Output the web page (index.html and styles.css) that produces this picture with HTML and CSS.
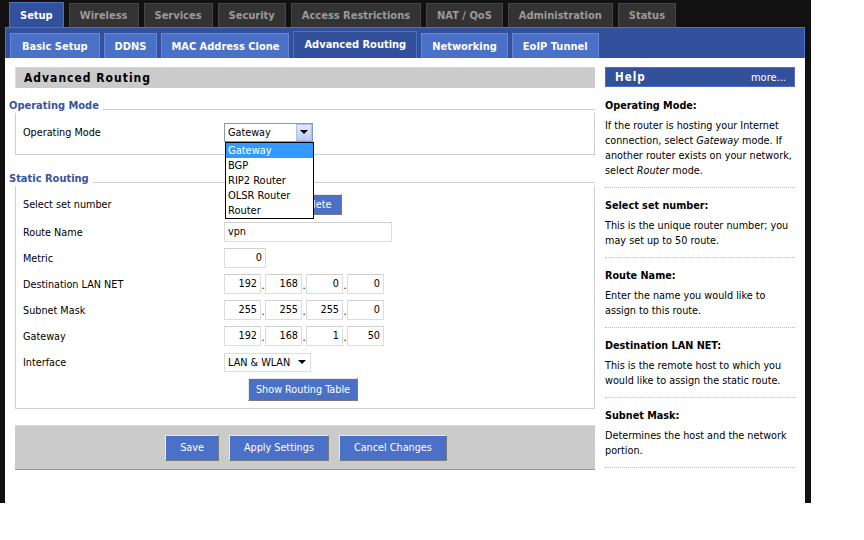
FILE: index.html
```html
<!DOCTYPE html>
<html>
<head>
<meta charset="utf-8">
<title>Advanced Routing</title>
<link rel="stylesheet" href="styles.css">
</head>
<body>
<div class="page">
  <div class="frame">
    <ul class="tabs">
      <li class="tab active">Setup</li>
      <li class="tab">Wireless</li>
      <li class="tab">Services</li>
      <li class="tab">Security</li>
      <li class="tab">Access Restrictions</li>
      <li class="tab">NAT / QoS</li>
      <li class="tab">Administration</li>
      <li class="tab">Status</li>
    </ul>
    <div class="subbar">
      <ul class="subtabs">
        <li class="subtab subtab-wide">Basic Setup</li>
        <li class="subtab">DDNS</li>
        <li class="subtab subtab-narrow">MAC Address Clone</li>
        <li class="subtab active">Advanced Routing</li>
        <li class="subtab">Networking</li>
        <li class="subtab">EoIP Tunnel</li>
      </ul>
    </div>
    <div class="content">
      <div class="main">
        <div class="pagehead">Advanced Routing</div>

        <div class="group">
          <div class="legend"><span class="legend-text">Operating Mode</span><span class="legend-line"></span></div>
          <div class="box box-op">
            <div class="row">
              <div class="label">Operating Mode</div>
              <div class="field">
                <div class="combo">
                  <span class="combo-value">Gateway</span>
                  <span class="combo-btn"><span class="tri"></span></span>
                  <ul class="dropdown">
                    <li class="opt selected">Gateway</li>
                    <li class="opt">BGP</li>
                    <li class="opt">RIP2 Router</li>
                    <li class="opt">OLSR Router</li>
                    <li class="opt">Router</li>
                  </ul>
                </div>
              </div>
            </div>
          </div>
        </div>

        <div class="group group-static">
          <div class="legend"><span class="legend-text">Static Routing</span><span class="legend-line"></span></div>
          <div class="box box-static">
            <div class="row row-first">
              <div class="label">Select set number</div>
              <div class="field">
                <span class="setsel">1 ( vpn )</span>
                <button class="btn btn-small">Delete</button>
              </div>
            </div>
            <div class="row">
              <div class="label">Route Name</div>
              <div class="field"><span class="input input-name">vpn</span></div>
            </div>
            <div class="row">
              <div class="label">Metric</div>
              <div class="field"><span class="input input-num input-metric">0</span></div>
            </div>
            <div class="row">
              <div class="label">Destination LAN NET</div>
              <div class="field ip">
                <span class="input input-num oct">192</span><span class="dot">.</span><span class="input input-num oct">168</span><span class="dot">.</span><span class="input input-num oct">0</span><span class="dot">.</span><span class="input input-num oct">0</span>
              </div>
            </div>
            <div class="row">
              <div class="label">Subnet Mask</div>
              <div class="field ip">
                <span class="input input-num oct">255</span><span class="dot">.</span><span class="input input-num oct">255</span><span class="dot">.</span><span class="input input-num oct">255</span><span class="dot">.</span><span class="input input-num oct">0</span>
              </div>
            </div>
            <div class="row">
              <div class="label">Gateway</div>
              <div class="field ip">
                <span class="input input-num oct">192</span><span class="dot">.</span><span class="input input-num oct">168</span><span class="dot">.</span><span class="input input-num oct">1</span><span class="dot">.</span><span class="input input-num oct">50</span>
              </div>
            </div>
            <div class="row">
              <div class="label">Interface</div>
              <div class="field">
                <span class="select-plain">LAN &amp; WLAN<span class="tri tri-plain"></span></span>
              </div>
            </div>
            <div class="btnrow">
              <button class="btn btn-table">Show Routing Table</button>
            </div>
          </div>
        </div>

        <div class="submitbar">
          <button class="btn btn-big">Save</button>
          <button class="btn btn-big">Apply Settings</button>
          <button class="btn btn-big">Cancel Changes</button>
        </div>
      </div>

      <div class="help">
        <div class="helphead"><span class="helptitle">Help</span><span class="helpmore">more...</span></div>
        <div class="item item-first">
          <div class="item-h">Operating Mode:</div>
          <p class="item-p">If the router is hosting your Internet connection, select <i>Gateway</i> mode. If another router exists on your network, select <i>Router</i> mode.</p>
        </div>
        <div class="item">
          <div class="item-h">Select set number:</div>
          <p class="item-p">This is the unique router number; you may set up to 50 route.</p>
        </div>
        <div class="item">
          <div class="item-h">Route Name:</div>
          <p class="item-p">Enter the name you would like to assign to this route.</p>
        </div>
        <div class="item">
          <div class="item-h">Destination LAN NET:</div>
          <p class="item-p">This is the remote host to which you would like to assign the static route.</p>
        </div>
        <div class="item">
          <div class="item-h">Subnet Mask:</div>
          <p class="item-p">Determines the host and the network portion.</p>
        </div>
      </div>
    </div>
  </div>
</div>
</body>
</html>
```

FILE: styles.css
```css
* { box-sizing: border-box; }
html, body { margin: 0; padding: 0; background: #fff; }
body {
  font-family: "DejaVu Sans Condensed", "Liberation Sans", sans-serif;
  font-size: 10.75px;
  color: #000;
}
ul { list-style: none; margin: 0; padding: 0; }

.page {
  width: 811px;
  height: 503px;
  background: #111;
  padding-left: 5px;
}
.frame { width: 800px; }

/* top tabs */
.tabs {
  height: 27px;
  display: flex;
  align-items: flex-end;
  gap: 5px;
  padding-left: 4px;
}
.tab {
  height: 24px;
  line-height: 24px;
  padding: 0 10px;
  background: #333;
  border: 1px solid #474747;
  border-bottom: none;
  color: #9a9a9a;
  font-weight: bold;
  font-size: 11px;
}
.tab.active {
  height: 25px;
  line-height: 25px;
  background: #33509c;
  border-color: #4d6fc4;
  color: #fff;
}

/* sub tabs */
.subbar {
  height: 31px;
  background: #33509c;
  border: 1px solid #4d6fc4;
  border-bottom: none;
  display: flex;
  align-items: flex-end;
}
.subtabs {
  display: flex;
  align-items: flex-end;
  gap: 4px;
  padding-left: 4px;
}
.subtab {
  height: 25px;
  line-height: 26px;
  padding: 0 10px;
  background: #4a70c8;
  border: 1px solid #6688d8;
  border-bottom: none;
  color: #fff;
  font-weight: bold;
  font-size: 11px;
}
.subtab-wide { padding: 0 11px; }
.subtab-narrow { padding: 0 9px; }
.subtab.active {
  height: 27px;
  line-height: 25px;
  padding: 0 10px;
  background: #33509c;
  border-color: #4d6fc4;
}

/* content */
.content {
  height: 445px;
  background: #fff;
  display: flex;
  gap: 10px;
  padding: 9px 10px 0 10px;
}
.main { width: 580px; }
.help { width: 190px; }

.pagehead {
  height: 21px;
  line-height: 21px;
  background: #cbcbcb;
  border-left: 1px solid #dedede;
  border-top: 1px solid #d8d8d8;
  padding-left: 8px;
  font-weight: bold;
  font-size: 12px;
  letter-spacing: 1px;
}

.group { margin-top: 11px; }
.group-static { margin-top: 17px; }
.legend {
  display: flex;
  height: 14px;
  margin-left: -6px;
}
.legend-text {
  color: #36549f;
  font-weight: bold;
  font-size: 11px;
  line-height: 14px;
  padding-right: 4px;
}
.legend-line {
  flex: 1;
  height: 1px;
  background: #cfcfcf;
  align-self: flex-end;
  margin-bottom: 3px;
}
.box {
  border: 1px solid #cfcfcf;
  border-top: none;
  padding-left: 7px;
}
.box-op { padding-top: 6px; padding-bottom: 9px; }
.box-static { padding-top: 3px; padding-bottom: 7px; }

.row {
  height: 26px;
  display: flex;
  align-items: center;
}
.row-first { height: 30px; }
.label { width: 201px; }
.field { display: flex; align-items: center; }

/* combo (open select) */
.combo {
  position: relative;
  width: 89px;
  height: 19px;
  border: 1px solid #7f9db9;
  background: #fff;
  display: flex;
  align-items: center;
}
.combo-value { flex: 1; padding-left: 3px; }
.combo-btn {
  width: 16px;
  height: 17px;
  background: linear-gradient(#e2ebfe, #b7cbf5);
  border: 1px solid #a9bff0;
  display: flex;
  align-items: center;
  justify-content: center;
}
.tri {
  width: 0;
  height: 0;
  border-left: 4px solid transparent;
  border-right: 4px solid transparent;
  border-top: 4px solid #000;
}
.dropdown {
  position: absolute;
  z-index: 10;
  top: 18px;
  left: 0;
  width: 89px;
  background: #fff;
  border: 1px solid #000;
}
.opt {
  height: 15px;
  line-height: 15px;
  padding-left: 2px;
  font-size: 11px;
}
.opt.selected { background: #3399ff; color: #fff; }

.setsel {
  width: 58px;
  height: 20px;
  margin-left: 2px;
  border: 1px solid #ccc;
  line-height: 18px;
  padding-left: 3px;
}

.input {
  height: 20px;
  border: 1px solid #dcdcdc;
  border-top-color: #cfcfcf;
  background: #fff;
  line-height: 18px;
  padding: 0 3px;
  display: block;
}
.input-name { width: 168px; }
.input-num { text-align: right; }
.input-metric { width: 42px; }
.oct { width: 37px; }
.dot { width: 4px; text-align: center; align-self: flex-end; line-height: 16px; }

.select-plain {
  width: 87px;
  height: 19px;
  border: 1px solid #dcdcdc;
  display: flex;
  align-items: center;
  justify-content: space-between;
  padding: 0 4px 0 3px;
}

.btn {
  font-family: inherit;
  font-size: 10.75px;
  color: #fff;
  background: #4a70c8;
  border: 1px solid;
  border-color: #e8e8e8 #7a7a7a #7a7a7a #e8e8e8;
  padding: 0;
  margin: 0;
}
.btn-small { height: 21px; width: 53px; margin-left: 5px; }
.btnrow { padding-left: 225px; padding-top: 3px; display: flex; }
.btn-table { height: 23px; width: 110px; }

.submitbar {
  margin-top: 16px;
  height: 45px;
  background: #cbcbcb;
  border-top: 1px solid #dadada;
  border-bottom: 1px solid #9a9a9a;
  display: flex;
  justify-content: center;
  align-items: center;
  gap: 10px;
  padding-left: 2px;
}
.btn-big { height: 26px; padding: 0 14px; }

/* help */
.helphead {
  height: 20px;
  background: #33509c;
  border: 1px solid #4d6fc4;
  color: #fff;
  display: flex;
  justify-content: space-between;
  align-items: center;
  padding: 0 8px 0 9px;
}
.helptitle { font-weight: bold; letter-spacing: 1px; font-size: 11.5px; }
.helpmore { font-size: 11px; }

.item {
  padding: 10px 0 9px;
  border-bottom: 1px dotted #bdbdbd;
}
.item-first { padding-top: 11px; }
.item-h { font-weight: bold; line-height: 15px; margin-bottom: 5px; }
.item-p { margin: 0; line-height: 15px; }
```
